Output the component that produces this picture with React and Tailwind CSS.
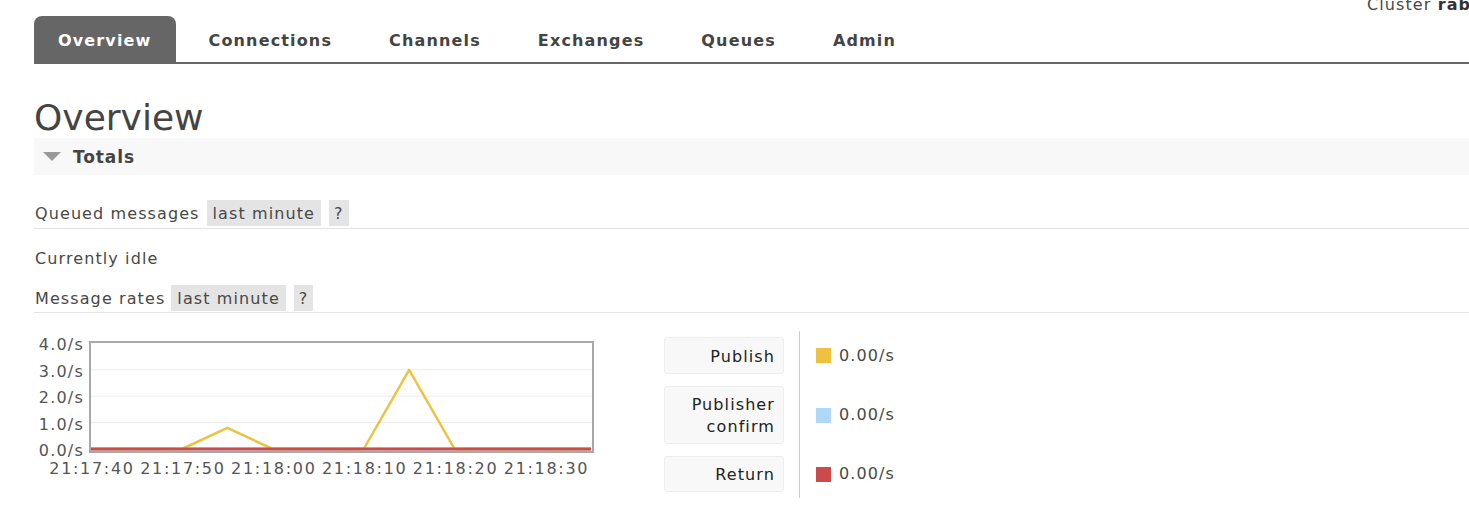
const tabs = ["Overview", "Connections", "Channels", "Exchanges", "Queues", "Admin"];

const Badge = ({ children, narrow }) => (
  <span className={`bg-[#e4e4e4] ${narrow ? "px-[5px]" : "px-[6px]"} h-[26px] pt-[1px] flex items-center`}>{children}</span>
);

const RateChart = () => {
  const pts = [0, 0, 0, 0.8, 0, 0, 0, 3, 0, 0, 0, 0];
  const x = (i) => 57 + i * 45.45;
  const y = (v) => 118 - v * 26.4;
  const line = pts.map((v, i) => `${x(i)},${y(v)}`).join(" ");
  const flat = pts.map((v, i) => `${x(i)},${y(0)}`).join(" ");
  const times = ["21:17:40", "21:17:50", "21:18:00", "21:18:10", "21:18:20", "21:18:30"];
  return (
    <svg width="566" height="150" className="shrink-0" style={{ fontFamily: "'DejaVu Sans', sans-serif" }}>
      {[1, 2, 3].map((v) => (
        <line key={v} x1="56" x2="558" y1={y(v)} y2={y(v)} stroke="#ececec" strokeWidth="1" />
      ))}
      <polyline points={flat} fill="none" stroke="#afd8f8" strokeWidth="3" />
      <polyline points={line} fill="none" stroke="#edc240" strokeWidth="2.5" strokeLinejoin="round" />
      <polyline points={flat} fill="none" stroke="#cb4b4b" strokeWidth="3" />
      <rect x="56" y="11" width="503" height="110" fill="none" stroke="#a8a8a8" strokeWidth="2" />
      {[0, 1, 2, 3, 4].map((v) => (
        <text key={v} x="50" y={y(v) + 7} textAnchor="end" fontSize="16" fill="#545454" letterSpacing="1.2">
          {v.toFixed(1)}/s
        </text>
      ))}
      {times.map((t, i) => (
        <text key={t} x={x(i * 2) + 1} y="143" textAnchor="middle" fontSize="16" fill="#545454" letterSpacing="1.7">
          {t}
        </text>
      ))}
    </svg>
  );
};

const legend = [
  { label: ["Publish"], color: "bg-[#edc240]", h: "h-[37px]" },
  { label: ["Publisher", "confirm"], color: "bg-[#afd8f8]", h: "h-[58px]" },
  { label: ["Return"], color: "bg-[#cb4b4b]", h: "h-[36px]" },
];

export default function App() {
  return (
    <div className="relative w-[1469px] h-[521px] overflow-hidden bg-white text-[16px] tracking-[1.1px] text-[#484848] font-['DejaVu_Sans',sans-serif]">
      <div className="absolute left-[1367px] top-[-7px] whitespace-nowrap">
        Cluster <b className="text-[#333]">rabbit@localhost</b>
      </div>

      <div className="pt-4 pl-[34px]">
        <nav className="flex gap-[9px] border-b-2 border-[#666] h-[48px]">
          {tabs.map((t, i) => (
            <div
              key={t}
              className={
                i === 0
                  ? "h-[46px] px-6 pt-1 flex items-center font-bold tracking-[1.15px] rounded-t-lg bg-[#666] text-white"
                  : "h-[46px] px-6 pt-1 flex items-center font-bold tracking-[1.15px] text-[#444]"
              }
            >
              {t}
            </div>
          ))}
        </nav>

        <h1 className="text-[36px] tracking-normal leading-[46px] mt-[28px] pt-[3px] h-[46px] text-[#444]">Overview</h1>

        <div className="h-[37px] bg-[#f8f8f8] flex items-center">
          <span className="ml-[9px] w-0 h-0 border-l-[9px] border-r-[9px] border-t-[9px] border-l-transparent border-r-transparent border-t-[#999]" />
          <span className="ml-[12px] pt-[3px] font-bold text-[17px] tracking-[0.9px] text-[#444]">Totals</span>
        </div>

        <div className="mt-[25px] flex items-center gap-2 pb-[2px] border-b border-[#e4e4e4]">
          <span className="mr-[-1px] pl-[1px] pt-[1px]">Queued messages</span>
          <Badge>last minute</Badge>
          <Badge narrow>?</Badge>
        </div>

        <div className="h-[29px] mt-[15px] pl-[1px] flex items-center">Currently idle</div>

        <div className="mt-[12px] flex items-center gap-2 pb-[1px] border-b border-[#e4e4e4]">
          <span className="mr-[-2px] pl-[1px] pt-[1px]">Message rates</span>
          <Badge>last minute</Badge>
          <Badge narrow>?</Badge>
        </div>

        <div className="flex mt-[18px]">
          <RateChart />
          <div className="ml-[64px] flex flex-col">
            {legend.map((l) => (
              <div key={l.color} className="flex">
                <div className="py-[6px] pr-[15px]">
                  <div className={`w-[120px] ${l.h} pr-2 pt-[2px] flex flex-col justify-center items-end leading-[22px] text-[#222] bg-[#f8f8f8] border border-[#eee] rounded-[3px]`}>
                    {l.label.map((s) => (
                      <span key={s}>{s}</span>
                    ))}
                  </div>
                </div>
                <div className="border-l border-[#ccc] pl-4 flex items-center">
                  <span className={`w-[15px] h-[15px] ${l.color}`} />
                  <span className="ml-2">0.00/s</span>
                </div>
              </div>
            ))}
          </div>
        </div>
      </div>
    </div>
  );
}
